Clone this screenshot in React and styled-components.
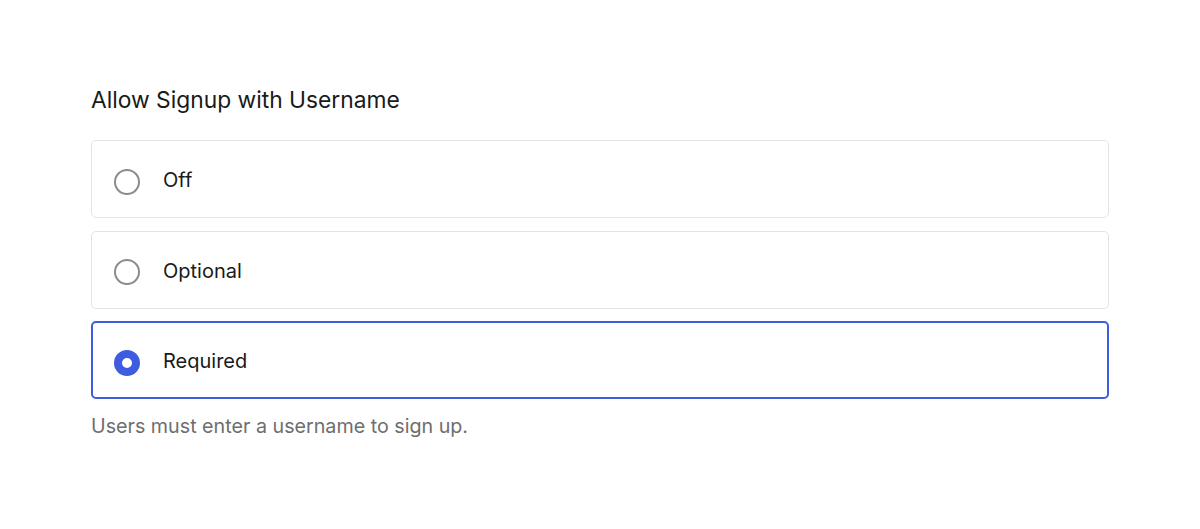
import React from 'react'
import styled, { createGlobalStyle } from 'styled-components'

const GlobalStyle = createGlobalStyle`
  body {
    margin: 0;
    background: #ffffff;
    font-family: Inter, "Noto Sans", sans-serif;
  }
`

const Page = styled.div`
  padding: 85px 91px 0;
`

const Title = styled.h2`
  margin: 0 0 25px;
  font-size: 22.8px;
  line-height: 30px;
  font-weight: 400;
  color: #1a1a1a;
`

const Options = styled.div`
  display: flex;
  flex-direction: column;
  gap: 12.5px;
`

const Option = styled.label`
  display: flex;
  align-items: center;
  gap: 23px;
  height: 78px;
  box-sizing: border-box;
  padding: 0 0 0 ${props => (props.selected ? '21px' : '22px')};
  border: ${props => (props.selected ? '2px solid #3d5ce0' : '1px solid #e3e3e3')};
  border-radius: 5px;
  background: #ffffff;
  cursor: pointer;
`

const Radio = styled.span`
  width: 26px;
  height: 26px;
  box-sizing: border-box;
  border-radius: 50%;
  border: ${props => (props.selected ? '8px solid #3d5ce0' : '2.5px solid #8c8c8c')};
  background: #ffffff;
  flex-shrink: 0;
  margin-top: 5px;
`

const Label = styled.span`
  font-size: 20px;
  color: #1a1a1a;
  margin-top: 2px;
`

const Hint = styled.p`
  margin: 15px 0 0;
  font-size: 19.7px;
  color: #6e6e6e;
`

const options = ['Off', 'Optional', 'Required']

const App = () => {
  const [value, setValue] = React.useState('Required')
  return (
    <Page>
      <GlobalStyle />
      <Title>Allow Signup with Username</Title>
      <Options>
        {options.map(opt => (
          <Option key={opt} selected={opt === value} onClick={() => setValue(opt)}>
            <Radio selected={opt === value} />
            <Label>{opt}</Label>
          </Option>
        ))}
      </Options>
      <Hint>Users must enter a username to sign up.</Hint>
    </Page>
  )
}

export default App
